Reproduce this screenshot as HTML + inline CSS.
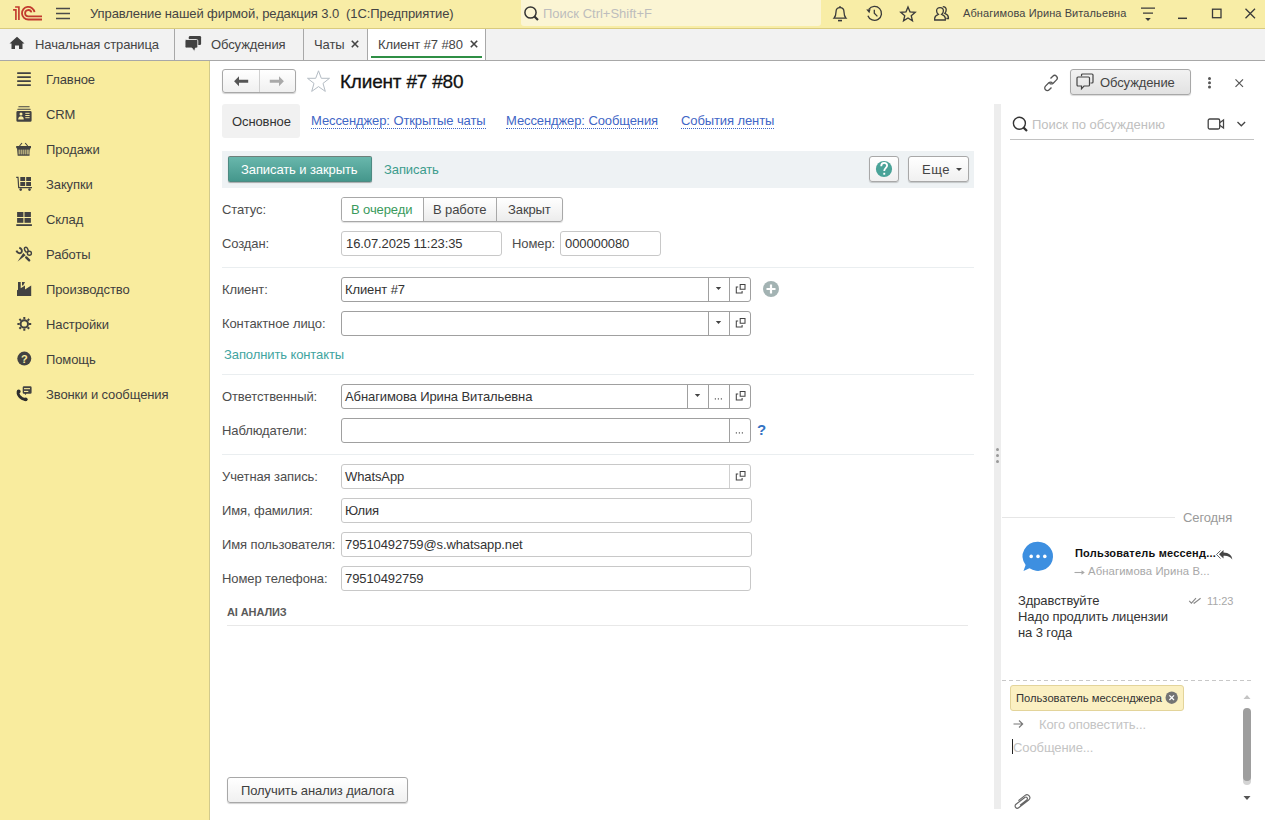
<!DOCTYPE html>
<html><head><meta charset="utf-8">
<style>
*{box-sizing:border-box;margin:0;padding:0}
html,body{width:1265px;height:820px;overflow:hidden;background:#fff}
body{font-family:"Liberation Sans",sans-serif;font-size:13px;color:#333;position:relative}
.a{position:absolute;white-space:nowrap;line-height:15px;letter-spacing:-0.1px}
svg{position:absolute;overflow:visible}
.bx{position:absolute}
#top{position:absolute;left:0;top:0;width:1265px;height:29px;background:#F8EDA6;border-bottom:1px solid #D9CB7E}
#tabs{position:absolute;left:0;top:29px;width:1265px;height:32px;background:#F2F2F2;border-bottom:1px solid #A8A8A8}
#side{position:absolute;left:0;top:61px;width:210px;height:759px;background:#F9EC9E;border-right:1px solid #D2CA8C}
.sep{position:absolute;background:#A8A8A8;width:1px}
.fld{position:absolute;border:1px solid #C8C8C8;border-radius:3px;background:#fff;height:25px}
.fld.d{border-color:#A0A0A0}
.vs{position:absolute;top:0;bottom:0;width:1px;background:#A0A0A0}
.hr{position:absolute;height:1px;background:#EAEEF0}
.btn{position:absolute;border:1px solid #A8A8A8;border-radius:3px;background:linear-gradient(#fff,#F0F0F0);box-shadow:0 1px 1px rgba(0,0,0,.18)}
.lbl{color:#4D4D4D}
.sb{color:#3F3F3F}
</style></head><body>

<!-- TOP BAR -->
<div id="top"></div>
<svg style="left:0;top:0" width="80" height="28" viewBox="0 0 80 28">
  <g stroke="#C23B2E" stroke-width="1.8" fill="none">
    <path d="M15.1 7 H18.9 V20 M13.1 9.9 H15.9 V20" stroke-width="1.65"/>
    <path d="M42 19.5 H28.4 A6.3 6.3 0 1 1 34.5 12.2"/>
    <path d="M42 16.4 H28.3 A3.2 3.2 0 1 1 31.4 12.4"/>
  </g>
  <g stroke="#4A4A4A" stroke-width="1.5">
    <path d="M56 8.5 H70 M56 13.5 H70 M56 18.5 H70"/>
  </g>
</svg>
<div class="a" style="left:90px;top:6px;color:#444">Управление нашей фирмой, редакция 3.0&nbsp; (1С:Предприятие)</div>
<div class="bx" style="left:521px;top:0px;width:300px;height:26px;background:#FBF5D4;border-radius:0 0 3px 3px"></div>
<svg style="left:523px;top:5px" width="18" height="18" viewBox="0 0 18 18">
  <circle cx="7.5" cy="7.5" r="5.6" stroke="#333" stroke-width="1.5" fill="none"/>
  <path d="M11.5 11.5 L15 15" stroke="#333" stroke-width="2.2"/>
</svg>
<div class="a" style="left:543px;top:6px;color:#BDBDBD;letter-spacing:0">Поиск Ctrl+Shift+F</div>
<svg style="left:826px;top:2px" width="130" height="24" viewBox="0 0 130 24">
  <g stroke="#3A3A3A" stroke-width="1.3" fill="none">
    <path d="M8 16.2 C9.5 14.5 10 13 10 10 C10 7 11.5 5.6 14 5.6 C16.5 5.6 18 7 18 10 C18 13 18.5 14.5 20 16.2 Z"/>
    <path d="M12 18.6 H16" stroke-width="1.6"/>
    <path d="M14 4 V5.6"/>
    <path d="M42.8 7.3 A7 7 0 1 1 41.9 13.7"/>
    <path d="M48.3 7.7 V11.3 L51.4 14.4"/>
    <path d="M82.00 5.00 L84.00 9.85 L89.23 10.25 L85.23 13.65 L86.47 18.75 L82.00 16.00 L77.53 18.75 L78.77 13.65 L74.77 10.25 L80.00 9.85 Z"/>
    <path d="M108.7 18 V16.3 C108.7 14.2 110.5 13.2 112.3 12.4 C110.9 11.4 110.6 10 110.6 8.8 C110.6 6.6 112 5.6 114 5.6 C116 5.6 117.4 6.6 117.4 8.8 C117.4 10 117.1 11.4 115.7 12.4 C117.5 13.2 119.3 14.2 119.3 16.3 V18 Z"/>
    <path d="M116.8 4.6 C118.6 4.6 120.2 5.4 120.2 7.8 C120.2 9.2 119.8 10.4 118.8 11.4 C120.3 12 122.4 13.2 122.4 15.5 V16.5 H120.3"/>
  </g>
  <path d="M40.2 7.6 L44.6 7.2 L43.4 11.2 Z" fill="#3A3A3A"/>
</svg>
<div class="a" style="left:963px;top:7px;font-size:11px;line-height:13px;color:#444;letter-spacing:0.1px">Абнагимова Ирина Витальевна</div>
<svg style="left:1130px;top:0" width="135" height="28" viewBox="0 0 135 28">
  <g stroke="#3A3A3A" stroke-width="1.3" fill="none">
    <path d="M11 8.2 H25 M13 13.2 H23" />
    <path d="M48 18.3 H57" stroke-width="1.5"/>
    <rect x="82.5" y="9.2" width="8.5" height="8.5"/>
    <path d="M115.5 8.7 L125 18.2 M125 8.7 L115.5 18.2"/>
  </g>
  <path d="M15.2 18 H20.8 L18 21 Z" fill="#3A3A3A"/>
</svg>

<!-- TABS -->
<div id="tabs"></div>
<svg style="left:8px;top:35px" width="18" height="16" viewBox="0 0 18 16">
  <path d="M1.5 8.5 L9 1.8 L16.5 8.5 H14.5 V14 H11 V10.5 H7 V14 H3.5 V8.5 Z" fill="#3F3F3F"/>
</svg>
<div class="a" style="left:35px;top:37px;color:#444">Начальная страница</div>
<div class="sep" style="left:174px;top:29px;height:32px"></div>
<svg style="left:184px;top:36px" width="18" height="16" viewBox="0 0 18 16">
  <rect x="4.8" y="0" width="12.3" height="9" rx="1.3" fill="#424242"/>
  <path d="M2.3 3.5 H12.5 A1.3 1.3 0 0 1 13.8 4.8 V10.7 A1.3 1.3 0 0 1 12.5 12 H11.5 L10.5 15.5 L7.8 12 H2.3 A1.3 1.3 0 0 1 1 10.7 V4.8 A1.3 1.3 0 0 1 2.3 3.5 Z" fill="#424242" stroke="#F2F2F2" stroke-width="0.9"/>
</svg>
<div class="a" style="left:211px;top:37px;color:#444">Обсуждения</div>
<div class="sep" style="left:303px;top:29px;height:32px"></div>
<div class="a" style="left:314px;top:37px;color:#444">Чаты</div>
<svg style="left:350px;top:39px" width="10" height="10" viewBox="0 0 10 10"><path d="M1.8 1.8 L8.2 8.2 M8.2 1.8 L1.8 8.2" stroke="#444" stroke-width="1.6"/></svg>
<div class="sep" style="left:367px;top:29px;height:32px"></div>
<div class="bx" style="left:368px;top:29px;width:117px;height:31px;background:#fff"></div>
<div class="bx" style="left:371px;top:56px;width:111px;height:2px;background:#2F8F45"></div>
<div class="a" style="left:378px;top:37px;color:#444">Клиент #7 #80</div>
<svg style="left:469px;top:39px" width="10" height="10" viewBox="0 0 10 10"><path d="M1.8 1.8 L8.2 8.2 M8.2 1.8 L1.8 8.2" stroke="#444" stroke-width="1.6"/></svg>
<div class="sep" style="left:485px;top:29px;height:32px"></div>

<!-- SIDEBAR -->
<div id="side"></div>
<svg style="left:0;top:61px" width="40" height="360" viewBox="0 61 40 360">
  <g fill="#424242">
    <!-- Главное -->
    <rect x="17" y="72.3" width="14" height="1.7" rx="0.8"/><rect x="17" y="76.3" width="14" height="1.7" rx="0.8"/><rect x="17" y="80.3" width="14" height="1.7" rx="0.8"/><rect x="17" y="84.3" width="14" height="1.7" rx="0.8"/>
    <!-- CRM -->
    <rect x="18.3" y="106.3" width="11.4" height="1" rx="0.5"/><rect x="17.3" y="108.7" width="13.4" height="1" rx="0.5"/>
    <path d="M17.8 110.9 H30.2 A1.4 1.4 0 0 1 31.6 112.3 V120.4 A1.4 1.4 0 0 1 30.2 121.8 H17.8 A1.4 1.4 0 0 1 16.4 120.4 V112.3 A1.4 1.4 0 0 1 17.8 110.9 Z"/>
    <!-- Продажи basket -->
    <path d="M16.2 146 H31 V148.3 H30.2 L29.5 155.7 H17.7 L17 148.3 H16.2 Z"/>
    <!-- Закупки cart -->
    <rect x="20.3" y="177" width="4.8" height="4"/><rect x="26.2" y="177" width="4.8" height="4"/>
    <rect x="20.3" y="182" width="4.8" height="4"/><rect x="26.2" y="182" width="4.8" height="4"/>
    <circle cx="20.7" cy="189.6" r="1.3"/><circle cx="29.5" cy="189.6" r="1.3"/>
    <!-- Склад -->
    <rect x="17.1" y="212" width="6.3" height="5"/><rect x="24.5" y="212" width="6.4" height="5"/>
    <rect x="17.1" y="218" width="6.3" height="4.8"/><rect x="24.5" y="218" width="6.4" height="4.8"/>
    <rect x="16.3" y="224.2" width="15.6" height="1.8"/>
    <!-- Производство -->
    <path d="M17 296 V290.3 L18 289.7 V282 H20.7 V288.2 L25 285.6 V289.5 L31.2 285.6 V296 Z"/>
    <path d="M22 282 H25 L23.2 285.5 H22 Z"/>
    <!-- Помощь -->
    <circle cx="24.3" cy="358.6" r="7"/>
    <path d="M23.3 253 L25.6 255.2 L17.6 261.6 Z"/>
    <!-- Звонки -->
    <path d="M24 386.3 H30.3 A1.3 1.3 0 0 1 31.6 387.6 V392.4 A1.3 1.3 0 0 1 30.3 393.7 H26.5 L25.3 395 L24.6 393.7 H24 A1.3 1.3 0 0 1 22.7 392.4 V387.6 A1.3 1.3 0 0 1 24 386.3 Z"/>
    <circle cx="18.7" cy="391.5" r="1.9" fill="#2E2E2E"/><circle cx="25.7" cy="399.3" r="1.9" fill="#2E2E2E"/>
  </g>
  <g fill="#F9EC9E">
    <circle cx="21" cy="114" r="1.5"/><path d="M18.2 119.5 C18.2 117 19.5 116.2 21 116.2 C22.5 116.2 23.8 117 23.8 119.5 Z"/>
    <rect x="25.3" y="112.8" width="4.3" height="1"/><rect x="25.3" y="115" width="4.3" height="1"/><rect x="25.3" y="117.2" width="4.3" height="1"/>
    <rect x="18.7" y="149.6" width="0.9" height="4.8"/><rect x="20.7" y="149.6" width="0.9" height="4.8"/><rect x="22.7" y="149.6" width="0.9" height="4.8"/><rect x="24.7" y="149.6" width="0.9" height="4.8"/><rect x="26.7" y="149.6" width="0.9" height="4.8"/><rect x="28.5" y="149.6" width="0.9" height="4.8"/>
    <rect x="24" y="388.1" width="6" height="1.1"/><rect x="24" y="390.9" width="4.3" height="1.1"/>
  </g>
  <g stroke="#424242" fill="none">
    <path d="M19.5 146 L22 143 M27.7 146 L25.2 143" stroke-width="1.1"/>
    <path d="M16.2 177.3 H18 L18.7 187.6 H32" stroke-width="1.2"/>
    <!-- Работы: wrench + screwdriver -->
    <path d="M19.3 247.6 C21.5 248.5 22.5 250.5 21.5 252.2 C20.5 253.8 17.5 253.5 16.4 250.6" stroke-width="1.9"/>
    <ellipse cx="26.3" cy="249.7" rx="1.6" ry="2.5" transform="rotate(-25 26.3 249.7)" stroke-width="1.4"/>
    <circle cx="29.4" cy="253.3" r="2" stroke-width="1.4"/>
    <path d="M26.2 257.4 L29.2 260.4" stroke-width="2.3" stroke-linecap="round"/>
    <!-- gear -->
    <circle cx="24.3" cy="323.9" r="3.7" stroke-width="2"/>
    <path d="M24.3 317 V319.3 M24.3 328.5 V330.8 M17.4 323.9 H19.7 M28.9 323.9 H31.2 M19.4 319 L21 320.6 M27.6 327.2 L29.2 328.8 M29.2 319 L27.6 320.6 M21 327.2 L19.4 328.8" stroke-width="2"/>
    <!-- phone -->
    <path d="M18.4 391.4 C17 394 19.8 398.8 25.8 399.6" stroke-width="2.7" stroke-linecap="round" stroke="#2E2E2E"/>
  </g>
  <text x="24.3" y="362.8" font-family="Liberation Sans" font-weight="bold" font-size="11" fill="#F9EC9E" text-anchor="middle">?</text>
</svg>
<div class="a sb" style="left:46px;top:72px">Главное</div>
<div class="a sb" style="left:46px;top:107px">CRM</div>
<div class="a sb" style="left:46px;top:142px">Продажи</div>
<div class="a sb" style="left:46px;top:177px">Закупки</div>
<div class="a sb" style="left:46px;top:212px">Склад</div>
<div class="a sb" style="left:46px;top:247px">Работы</div>
<div class="a sb" style="left:46px;top:282px">Производство</div>
<div class="a sb" style="left:46px;top:317px">Настройки</div>
<div class="a sb" style="left:46px;top:352px">Помощь</div>
<div class="a sb" style="left:46px;top:387px">Звонки и сообщения</div>

<!-- FORM HEADER -->
<div class="btn" style="left:222px;top:69px;width:74px;height:24px"></div>
<div class="bx" style="left:259px;top:70px;width:1px;height:22px;background:#D0D0D0"></div>
<svg style="left:222px;top:69px" width="74" height="24" viewBox="0 0 74 24">
  <path d="M12.1 12.2 L17 7.2 V10.7 H26.2 V13.7 H17 V17.2 Z" fill="#555"/>
  <path d="M61.9 12.2 L57 7.2 V10.7 H47.8 V13.7 H57 V17.2 Z" fill="#A9A9A9"/>
</svg>
<svg style="left:306px;top:70px" width="25" height="23" viewBox="0 0 25 23">
  <path d="M12.5 0.8 L15.3 8.3 L23.5 8.3 L17 13.4 L19.3 21.4 L12.5 16.6 L5.7 21.4 L8 13.4 L1.5 8.3 L9.7 8.3 Z" fill="none" stroke="#B4BCC4" stroke-width="1"/>
</svg>
<div class="a" style="left:340px;top:71px;font-size:19px;line-height:21px;color:#111;-webkit-text-stroke:0.3px #111;letter-spacing:-0.2px">Клиент #7 #80</div>

<div class="bx" style="left:222px;top:104px;width:78px;height:34px;background:#F1F1F1;border-radius:3px"></div>
<div class="a" style="left:232px;top:114px;color:#333">Основное</div>
<div class="a" style="left:311px;top:114px;color:#3F66C6;border-bottom:1px dotted #3F66C6;line-height:14px;height:15px">Мессенджер: Открытые чаты</div>
<div class="a" style="left:506px;top:114px;color:#3F66C6;border-bottom:1px dotted #3F66C6;line-height:14px;height:15px">Мессенджер: Сообщения</div>
<div class="a" style="left:681px;top:114px;color:#3F66C6;border-bottom:1px dotted #3F66C6;line-height:14px;height:15px">События ленты</div>

<!-- COMMAND BAR -->
<div class="bx" style="left:222px;top:151px;width:752px;height:37px;background:#EEF2F4"></div>
<div class="bx" style="left:228px;top:156px;width:144px;height:26px;border-radius:2px;background:linear-gradient(#69B7AC,#45978C);border:1px solid #4D8A82;border-top-color:#6F7F7A;box-shadow:0 1px 1px rgba(0,0,0,.3)"></div>
<div class="a" style="left:241px;top:162px;color:#fff">Записать и закрыть</div>
<div class="a" style="left:384px;top:162px;color:#3C9C8C">Записать</div>
<div class="btn" style="left:869px;top:156px;width:30px;height:26px"></div>
<svg style="left:869px;top:156px" width="30" height="26" viewBox="0 0 30 26">
  <circle cx="15" cy="13" r="8.1" fill="#4AA398"/>
  <path d="M12.2 10.2 C12.2 7.8 13.6 6.8 15.1 6.8 C17 6.8 18.1 8 18.1 9.5 C18.1 11.6 15.2 12.1 15.2 15" stroke="#fff" stroke-width="1.8" fill="none"/>
  <rect x="14.3" y="16.8" width="1.9" height="1.9" fill="#fff"/>
</svg>
<div class="btn" style="left:908px;top:156px;width:61px;height:26px"></div>
<div class="a" style="left:922px;top:162px;color:#444;letter-spacing:0.5px">Еще</div>
<svg style="left:955px;top:167px" width="8" height="5" viewBox="0 0 8 5"><path d="M1 1 H7 L4 4 Z" fill="#444"/></svg>

<!-- STATUS -->
<div class="a lbl" style="left:222px;top:202px">Статус:</div>
<div class="bx" style="left:341px;top:197px;width:222px;height:25px;border:1px solid #A8A8A8;border-radius:3px;background:linear-gradient(#fff,#ECECEC);box-shadow:0 1px 1px rgba(0,0,0,.12)"></div>
<div class="bx" style="left:342px;top:198px;width:81px;height:23px;background:#fff;border-radius:2px 0 0 2px"></div>
<div class="bx" style="left:423px;top:198px;width:1px;height:23px;background:#A8A8A8"></div>
<div class="bx" style="left:496px;top:198px;width:1px;height:23px;background:#A8A8A8"></div>
<div class="a" style="left:351px;top:202px;color:#3A9A5C">В очереди</div>
<div class="a" style="left:433px;top:202px;color:#444">В работе</div>
<div class="a" style="left:508px;top:202px;color:#444">Закрыт</div>

<div class="a lbl" style="left:222px;top:236px">Создан:</div>
<div class="fld" style="left:341px;top:231px;width:161px;height:25px"></div>
<div class="a" style="left:346px;top:236px;color:#333">16.07.2025 11:23:35</div>
<div class="a lbl" style="left:512px;top:236px">Номер:</div>
<div class="fld" style="left:560px;top:231px;width:101px;height:25px"></div>
<div class="a" style="left:565px;top:236px;color:#333">000000080</div>
<div class="hr" style="left:222px;top:267px;width:752px"></div>

<!-- CLIENT -->
<div class="a lbl" style="left:222px;top:282px">Клиент:</div>
<div class="fld d" style="left:341px;top:277px;width:410px;height:25px"><div class="vs" style="left:366px"></div><div class="vs" style="left:387px"></div></div>
<div class="a" style="left:345px;top:282px;color:#333">Клиент #7</div>
<div class="a lbl" style="left:222px;top:316px">Контактное лицо:</div>
<div class="fld d" style="left:341px;top:311px;width:410px;height:25px"><div class="vs" style="left:366px"></div><div class="vs" style="left:387px"></div></div>
<svg style="left:700px;top:277px" width="80" height="60" viewBox="0 0 80 60">
  <path d="M15.8 10 H21.2 L18.5 13 Z M15.8 44 H21.2 L18.5 47 Z" fill="#444"/>
  <g stroke="#444" stroke-width="1.05" fill="none">
    <path d="M38.2 10 H36.3 V15.9 H42.1 V14 M40.2 7.4 H45 V12.3 H40.2 Z"/>
    <path d="M38.2 44 H36.3 V49.9 H42.1 V48 M40.2 41.4 H45 V46.3 H40.2 Z"/>
  </g>
  <circle cx="71" cy="12" r="8" fill="#A3B3B3"/>
  <path d="M71 7.5 V16.5 M66.5 12 H75.5" stroke="#fff" stroke-width="2.2"/>
</svg>
<div class="a" style="left:224px;top:347px;color:#3FA4A0">Заполнить контакты</div>
<div class="hr" style="left:222px;top:374px;width:752px"></div>

<!-- RESPONSIBLE -->
<div class="a lbl" style="left:222px;top:389px">Ответственный:</div>
<div class="fld d" style="left:341px;top:384px;width:410px;height:25px"><div class="vs" style="left:345px"></div><div class="vs" style="left:366px"></div><div class="vs" style="left:387px"></div></div>
<div class="a" style="left:345px;top:389px;color:#333">Абнагимова Ирина Витальевна</div>
<div class="a lbl" style="left:222px;top:423px">Наблюдатели:</div>
<div class="fld d" style="left:341px;top:418px;width:410px;height:25px"><div class="vs" style="left:387px"></div></div>
<svg style="left:680px;top:384px" width="100" height="60" viewBox="0 0 100 60">
  <path d="M14.8 10 H20.2 L17.5 13 Z" fill="#444"/>
  <g fill="#555">
    <rect x="34.8" y="14.3" width="1.2" height="1.2"/><rect x="37.8" y="14.3" width="1.2" height="1.2"/><rect x="40.8" y="14.3" width="1.2" height="1.2"/>
    <rect x="55.8" y="48.3" width="1.2" height="1.2"/><rect x="58.8" y="48.3" width="1.2" height="1.2"/><rect x="61.8" y="48.3" width="1.2" height="1.2"/>
  </g>
  <g stroke="#444" stroke-width="1.05" fill="none">
    <path d="M58.2 10 H56.3 V15.9 H62.1 V14 M60.2 7.4 H65 V12.3 H60.2 Z"/>
  </g>
</svg>
<div class="a" style="left:757px;top:422px;color:#3473C3;font-size:15px;line-height:15px;font-weight:bold">?</div>
<div class="hr" style="left:222px;top:454px;width:752px"></div>

<!-- ACCOUNT -->
<div class="a lbl" style="left:222px;top:469px">Учетная запись:</div>
<div class="fld" style="left:341px;top:464px;width:410px;height:25px"><div class="vs" style="left:387px;background:#D0D0D0"></div></div>
<svg style="left:700px;top:464px" width="60" height="25" viewBox="0 0 60 25">
  <g stroke="#444" stroke-width="1.05" fill="none">
    <path d="M38.2 10 H36.3 V15.9 H42.1 V14 M40.2 7.4 H45 V12.3 H40.2 Z"/>
  </g>
</svg>
<div class="a" style="left:345px;top:469px;color:#333">WhatsApp</div>
<div class="a lbl" style="left:222px;top:503px">Имя, фамилия:</div>
<div class="fld" style="left:341px;top:498px;width:411px;height:25px"></div>
<div class="a" style="left:345px;top:503px;color:#333">Юлия</div>
<div class="a lbl" style="left:222px;top:537px">Имя пользователя:</div>
<div class="fld" style="left:341px;top:532px;width:411px;height:25px"></div>
<div class="a" style="left:345px;top:537px;color:#333">79510492759@s.whatsapp.net</div>
<div class="a lbl" style="left:222px;top:571px">Номер телефона:</div>
<div class="fld" style="left:341px;top:566px;width:410px;height:25px"></div>
<div class="a" style="left:345px;top:571px;color:#333">79510492759</div>

<div class="a" style="left:227px;top:606px;font-size:11px;line-height:13px;font-weight:bold;color:#5A5A5A">AI АНАЛИЗ</div>
<div class="hr" style="left:227px;top:625px;width:741px;background:#E8E8E8"></div>

<div class="btn" style="left:227px;top:777px;width:181px;height:26px"></div>
<div class="a" style="left:241px;top:783px;color:#404040">Получить анализ диалога</div>

<!-- CHAT HEADER -->
<svg style="left:1040px;top:72px" width="22" height="22" viewBox="0 0 22 22">
  <g stroke="#555" stroke-width="1.3" fill="none">
    <path d="M10.5 6.5 L12.8 4.2 A2.6 2.6 0 0 1 16.5 7.9 L13.2 11.2 A2.6 2.6 0 0 1 9.5 11.2"/>
    <path d="M11.5 15.5 L9.2 17.8 A2.6 2.6 0 0 1 5.5 14.1 L8.8 10.8 A2.6 2.6 0 0 1 12.5 10.8"/>
  </g>
</svg>
<div class="bx" style="left:1070px;top:69px;width:121px;height:26px;border:1px solid #A8A8A8;border-radius:3px;background:linear-gradient(#F2F2F2,#E2E2E2);box-shadow:0 1px 1px rgba(0,0,0,.15)"></div>
<svg style="left:1076px;top:73px" width="20" height="18" viewBox="0 0 20 18">
  <g stroke="#444" stroke-width="1.2" fill="none">
    <path d="M5.5 3.2 V2 A1 1 0 0 1 6.5 1 H16 A1 1 0 0 1 17 2 V9 A1 1 0 0 1 16 10 H14.5"/>
    <path d="M2 4 H12.5 A1 1 0 0 1 13.5 5 V12 A1 1 0 0 1 12.5 13 H8 L5.5 15.8 V13 H2 A1 1 0 0 1 1 12 V5 A1 1 0 0 1 2 4 Z"/>
  </g>
</svg>
<div class="a" style="left:1100px;top:75px;color:#444">Обсуждение</div>
<svg style="left:1205px;top:74px" width="10" height="18" viewBox="0 0 10 18">
  <circle cx="4.5" cy="4.6" r="1.5" fill="#555"/><circle cx="4.5" cy="8.8" r="1.5" fill="#555"/><circle cx="4.5" cy="13" r="1.5" fill="#555"/>
</svg>
<svg style="left:1233px;top:77px" width="12" height="12" viewBox="0 0 12 12"><path d="M2.5 2.3 L10 9.8 M10 2.3 L2.5 9.8" stroke="#555" stroke-width="1.2"/></svg>

<!-- CHAT PANEL -->
<div class="bx" style="left:994px;top:104px;width:7px;height:705px;background:#EDEDED"></div>
<svg style="left:994px;top:445px" width="7" height="20" viewBox="0 0 7 20">
  <circle cx="3.5" cy="4.5" r="1.5" fill="#999"/><circle cx="3.5" cy="10.5" r="1.5" fill="#999"/><circle cx="3.5" cy="16.5" r="1.5" fill="#999"/>
</svg>
<svg style="left:1010px;top:114px" width="22" height="22" viewBox="0 0 22 22">
  <circle cx="9.4" cy="9.3" r="6" stroke="#333" stroke-width="1.4" fill="none"/>
  <path d="M13.6 13.6 L17 17" stroke="#333" stroke-width="2.2"/>
</svg>
<div class="a" style="left:1032px;top:117px;color:#C0C0C0;letter-spacing:0">Поиск по обсуждению</div>
<svg style="left:1204px;top:114px" width="50" height="20" viewBox="0 0 50 20">
  <g stroke="#444" stroke-width="1.3" fill="none">
    <rect x="4.2" y="5" width="11.5" height="10" rx="1.5"/>
    <path d="M15.7 8.8 L19.5 6 V14 L15.7 11.2"/>
    <path d="M33.5 8 L37.3 11.8 L41.1 8"/>
  </g>
</svg>
<div class="bx" style="left:1010px;top:139px;width:244px;height:1px;background:#C2C2C2"></div>

<div class="bx" style="left:1002px;top:517px;width:173px;height:1px;background:#E6E6E6"></div>
<div class="a" style="left:1183px;top:510px;color:#9A9A9A">Сегодня</div>

<svg style="left:1020px;top:540px" width="36" height="34" viewBox="0 0 36 34">
  <path d="M18 1.7 A15 14.6 0 1 1 9.5 28.3 L3.5 31 L5.6 25 A15 14.6 0 0 1 18 1.7 Z" fill="#3D8FE0"/>
  <circle cx="11.2" cy="16.4" r="1.8" fill="#fff"/><circle cx="18" cy="16.4" r="1.8" fill="#fff"/><circle cx="24.8" cy="16.4" r="1.8" fill="#fff"/>
</svg>
<div class="a" style="left:1075px;top:547px;font-size:11px;line-height:13px;font-weight:bold;color:#111;letter-spacing:0.2px">Пользователь мессенд...</div>
<svg style="left:1214px;top:546px" width="22" height="16" viewBox="0 0 22 16">
  <path d="M6.5 4.5 L2.5 8.5 L6.5 12.5" stroke="#666" stroke-width="1" fill="none"/>
  <path d="M9.5 4 L5 8.3 L9.5 12.6 V9.8 C13.5 9.5 16 10.5 18.3 13.5 C17.8 9 15 6.8 9.5 6.5 Z" fill="#444"/>
</svg>
<svg style="left:1074px;top:568px" width="12" height="9" viewBox="0 0 12 9"><path d="M0.5 4.5 H10" stroke="#A8A8A8" stroke-width="1.1"/><path d="M7.5 2.3 L10.8 4.5 L7.5 6.7 Z" fill="#A8A8A8"/></svg>
<div class="a" style="left:1088px;top:564px;font-size:11.3px;line-height:14px;color:#A8A8A8;letter-spacing:0.1px">Абнагимова Ирина В...</div>

<div class="a" style="left:1018px;top:593px;color:#333;line-height:16px">Здравствуйте<br>Надо продлить лицензии<br>на 3 года</div>
<svg style="left:1186px;top:595px" width="16" height="10" viewBox="0 0 16 10">
  <path d="M3.2 5.8 L5.4 8.2 L10 3.2 M7.6 7.6 L8.2 8.2 L14.6 3.2" stroke="#888" stroke-width="1.1" fill="none"/>
</svg>
<div class="a" style="left:1207px;top:594px;color:#A8A8A8;font-size:11px">11:23</div>

<div class="bx" style="left:1002px;top:680px;width:250px;height:1px;background:repeating-linear-gradient(90deg,#C8C8C8 0 4px,transparent 4px 7px)"></div>
<div class="bx" style="left:1010px;top:685px;width:174px;height:26px;background:#FBF0C2;border:1px solid #E3D49A;border-radius:3px"></div>
<div class="a" style="left:1016px;top:692px;font-size:11.2px;line-height:13px;color:#333;letter-spacing:0">Пользователь мессенджера</div>
<svg style="left:1165px;top:691px" width="14" height="14" viewBox="0 0 14 14">
  <circle cx="6.7" cy="6.7" r="6.2" fill="#747474"/>
  <path d="M4.4 4.4 L9 9 M9 4.4 L4.4 9" stroke="#fff" stroke-width="1.3"/>
</svg>
<svg style="left:1012px;top:718px" width="14" height="12" viewBox="0 0 14 12">
  <path d="M1.5 6 H10.5 M7 2.5 L10.7 6 L7 9.5" stroke="#777" stroke-width="1.1" fill="none"/>
</svg>
<div class="a" style="left:1039px;top:717px;color:#C4C4C4">Кого оповестить...</div>
<div class="bx" style="left:1012px;top:739px;width:1px;height:15px;background:#222"></div>
<div class="a" style="left:1013px;top:740px;color:#C4C4C4">Сообщение...</div>
<svg style="left:1240px;top:690px" width="14" height="112" viewBox="0 0 14 112">
  <path d="M3.5 9 H10.5 L7 5 Z" fill="#C4C4C4"/>
  <rect x="3" y="78" width="8" height="17" rx="4" fill="#D4D4D4"/><rect x="3" y="18" width="8" height="73" rx="4" fill="#9E9E9E"/>
  <path d="M3.5 106 H10.5 L7 110 Z" fill="#555"/>
</svg>
<svg style="left:1012px;top:794px" width="20" height="16" viewBox="0 0 20 16">
  <g transform="rotate(-38 10 8)"><path d="M6.5 9.3 H15 A1.6 1.6 0 0 0 15 6.1 H3.8 A2.2 2.2 0 0 0 3.8 10.5 H16.5 A2.9 2.9 0 0 0 16.5 4.7 H8" stroke="#666" stroke-width="1.15" fill="none"/></g>
</svg>

</body></html>
